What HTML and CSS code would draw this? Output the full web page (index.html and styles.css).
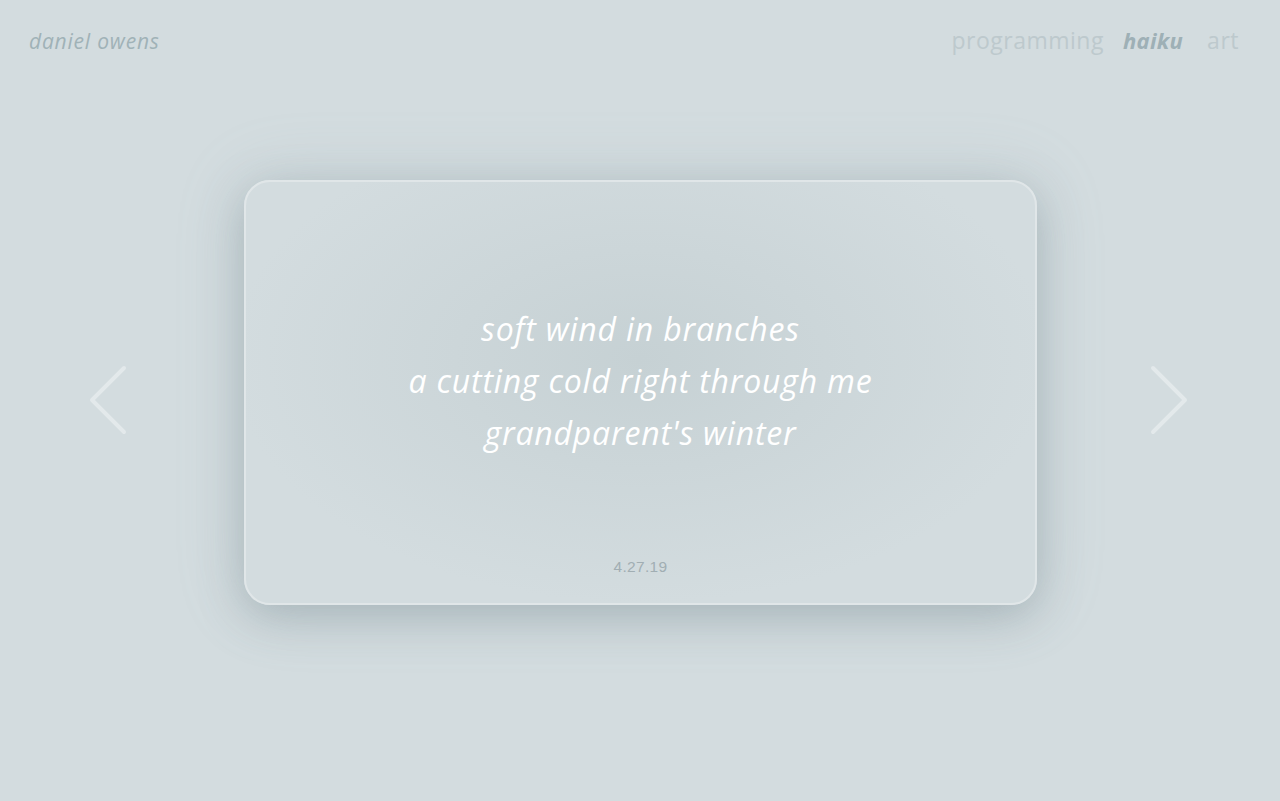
FILE: index.html
```html
<!DOCTYPE html>
<html>
<head>
<meta charset="utf-8">
<link rel="stylesheet" href="styles.css">
</head>
<body>
<header class="top">
  <div class="brand">daniel owens</div>
  <nav class="nav">
    <a class="nav-link">programming</a>
    <a class="nav-link active">haiku</a>
    <a class="nav-link">art</a>
  </nav>
</header>
<main class="stage">
  <button class="arrow">
    <svg width="44" height="76" viewBox="0 0 44 76"><path d="M36 4 L4 36 L36 68" fill="none" stroke="#e3e9eb" stroke-width="4" stroke-linecap="round" stroke-linejoin="round"/></svg>
  </button>
  <section class="card">
    <div class="poem">
      <p>soft wind in branches</p>
      <p>a cutting cold right through me</p>
      <p>grandparent's winter</p>
    </div>
    <div class="date">4.27.19</div>
  </section>
  <button class="arrow">
    <svg width="44" height="76" viewBox="0 0 44 76"><path d="M4 4 L36 36 L4 68" fill="none" stroke="#e3e9eb" stroke-width="4" stroke-linecap="round" stroke-linejoin="round"/></svg>
  </button>
</main>
</body>
</html>
```
FILE: styles.css
```css
html, body {
  margin: 0;
  height: 100%;
}
body {
  background: #d3dcdf;
  font-family: "Open Sans", "Lato", sans-serif;
  overflow: hidden;
}
.top {
  display: flex;
  justify-content: space-between;
  align-items: center;
  height: 80px;
  padding: 0 41px 0 29px;
}
.brand {
  font-family: "Open Sans", sans-serif;
  font-style: italic;
  font-size: 21px;
  color: #a0b2b7;
  letter-spacing: 0.8px;
  padding-top: 1px;
}
.nav {
  display: flex;
  align-items: center;
}
.nav-link {
  font-size: 23px;
  color: #bdc9cd;
  letter-spacing: 0.5px;
}
.nav-link.active {
  font-style: italic;
  font-weight: 700;
  color: #9eb0b6;
  font-size: 22px;
  letter-spacing: 0.3px;
  margin: 0 24px 0 19px;
}
.stage {
  display: flex;
  align-items: flex-start;
  gap: 112px;
  padding: 100px 0 0 88px;
}
.arrow {
  background: none;
  border: none;
  padding: 0;
  margin-top: 184px;
  width: 44px;
  height: 76px;
  flex: none;
}
.card {
  box-sizing: border-box;
  flex: none;
  width: 793px;
  height: 425px;
  border: 2px solid #e0e6e8;
  border-radius: 26px;
  background: radial-gradient(ellipse 52% 58% at 50% 42%, #c6d1d4 0%, #ccd6d9 45%, #d3dcdf 100%);
  box-shadow: 0 12px 44px rgba(110, 130, 138, 0.38), 0 0 70px rgba(150, 168, 175, 0.2);
  display: flex;
  flex-direction: column;
  align-items: center;
  padding-top: 121px;
}
.poem {
  text-align: center;
  color: #ffffff;
  font-style: italic;
  font-size: 32px;
  line-height: 52px;
  letter-spacing: 0.8px;
}
.poem p {
  margin: 0;
}
.date {
  margin-top: 99px;
  font-family: "Liberation Sans", Arial, sans-serif;
  font-size: 15.5px;
  color: #a1aeb3;
  letter-spacing: 0.3px;
}
```
